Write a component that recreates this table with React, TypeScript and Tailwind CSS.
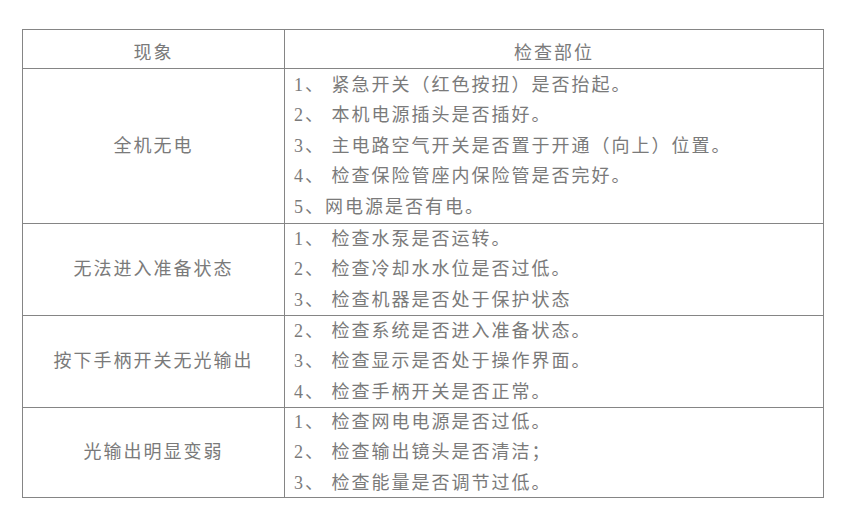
import React from "react";

const rows: { name: string; h: string; items: string[] }[] = [
  {
    name: "全机无电",
    h: "h-[155px]",
    items: [
      "1、 紧急开关（红色按扭）是否抬起。",
      "2、 本机电源插头是否插好。",
      "3、 主电路空气开关是否置于开通（向上）位置。",
      "4、 检查保险管座内保险管是否完好。",
      "5、网电源是否有电。",
    ],
  },
  {
    name: "无法进入准备状态",
    h: "h-[92px]",
    items: ["1、 检查水泵是否运转。", "2、 检查冷却水水位是否过低。", "3、 检查机器是否处于保护状态"],
  },
  {
    name: "按下手柄开关无光输出",
    h: "h-[92px]",
    items: ["2、 检查系统是否进入准备状态。", "3、 检查显示是否处于操作界面。", "4、 检查手柄开关是否正常。"],
  },
  {
    name: "光输出明显变弱",
    h: "h-[90px]",
    items: ["1、 检查网电电源是否过低。", "2、 检查输出镜头是否清洁；", "3、 检查能量是否调节过低。"],
  },
];

export default function App() {
  return (
    <div className="w-[846px] h-[513px] bg-white pt-[29px] pl-[22px] text-[18px] tracking-[2px] text-[#7a7a7a] [font-family:'Liberation_Serif','Noto_Sans_CJK_SC',serif]">
      <div className="grid grid-cols-[262px_539px] w-[802px] border-l border-t border-[#858585]">
        <div className="h-[39px] border-r border-b border-[#858585] flex items-center justify-center pt-[9px]">现象</div>
        <div className="h-[39px] border-r border-b border-[#858585] flex items-center justify-center pt-[9px]">检查部位</div>
        {rows.map((r) => (
          <React.Fragment key={r.name}>
            <div className={`${r.h} border-r border-b border-[#858585] flex items-center justify-center`}>{r.name}</div>
            <div className={`${r.h} border-r border-b border-[#858585] flex flex-col justify-center pl-[9px] leading-[30.5px] whitespace-pre`}>
              {r.items.map((t) => (
                <div key={t}>{t}</div>
              ))}
            </div>
          </React.Fragment>
        ))}
      </div>
    </div>
  );
}
